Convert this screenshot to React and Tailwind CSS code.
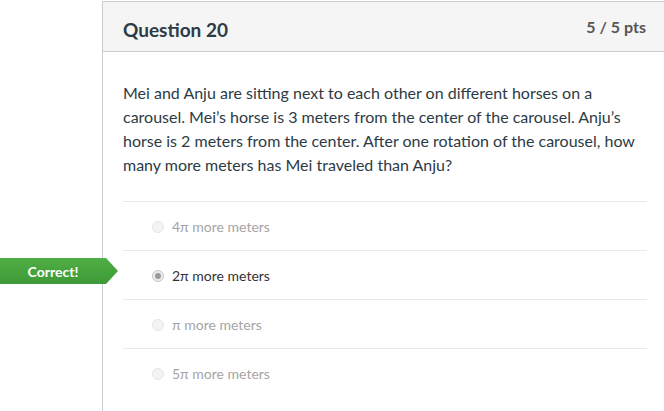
import React from "react";

const answers = [
  { text: "4π more meters", selected: false },
  { text: "2π more meters", selected: true, correct: true },
  { text: "π more meters", selected: false },
  { text: "5π more meters", selected: false },
];

function Radio({ selected }) {
  if (selected) {
    return (
      <span className="w-3 h-3 rounded-full border border-[#c8c8c8] bg-[#ececec] flex items-center justify-center shrink-0">
        <span className="w-[6px] h-[6px] rounded-full bg-[#9a9a9a]" />
      </span>
    );
  }
  return <span className="w-3 h-3 rounded-full border border-[#e6e6e6] bg-[#f4f4f4] shrink-0" />;
}

export default function App() {
  return (
    <div
      className="w-[664px] h-[411px] bg-white overflow-hidden pt-px"
      style={{ fontFamily: "Lato, 'Open Sans', sans-serif" }}
    >
      <div className="flex h-full">
        <div className="w-[102px] shrink-0" />
        <div className="flex-1 border-l border-t border-[#c7cdd1] flex flex-col">
          {/* header */}
          <div className="h-[50px] bg-[#f5f5f5] border-b border-[#c7cdd1] flex justify-between pl-5 pr-[18px]">
            <h2 className="text-[19px] font-bold text-[#2d3b45] pt-[14px] leading-[28px]">Question 20</h2>
            <div className="text-[16px] font-bold text-[#555] pt-[12px] leading-[26px]">5 / 5 pts</div>
          </div>

          {/* body */}
          <div className="pl-5 pr-[17px] pt-[29px]">
            <p className="text-[16px] leading-[24px] text-[#2d3b45]">
              Mei and Anju are sitting next to each other on different horses on a carousel. Mei’s horse is 3 meters from
              the center of the carousel. Anju’s horse is 2 meters from the center. After one rotation of the carousel, how
              many more meters has Mei traveled than Anju?
            </p>

            <div className="mt-[24px]">
              {answers.map((a) => (
                <div
                  key={a.text}
                  className="relative h-[49px] border-t border-[#e8eaec] flex items-center gap-2 pl-[29px] pt-[1px]"
                >
                  {a.correct && (
                    <div className="absolute left-[-123px] top-[7px] h-[26px] w-[118px] flex">
                      <div className="w-[106px] h-full bg-gradient-to-b from-[#4fae45] to-[#3d9a36] flex items-center justify-center text-white font-bold text-[14px]">
                        Correct!
                      </div>
                      <svg width="12" height="26" viewBox="0 0 12 26" className="block">
                        <defs>
                          <linearGradient id="g" x1="0" y1="0" x2="0" y2="1">
                            <stop offset="0" stopColor="#4fae45" />
                            <stop offset="1" stopColor="#3d9a36" />
                          </linearGradient>
                        </defs>
                        <polygon points="0,0 12,13 0,26" fill="url(#g)" />
                      </svg>
                    </div>
                  )}
                  <Radio selected={a.selected} />
                  <span className={"text-[14px] " + (a.selected ? "text-[#333]" : "text-[#a5a5a5]")}>{a.text}</span>
                </div>
              ))}
            </div>
          </div>
        </div>
      </div>
    </div>
  );
}
